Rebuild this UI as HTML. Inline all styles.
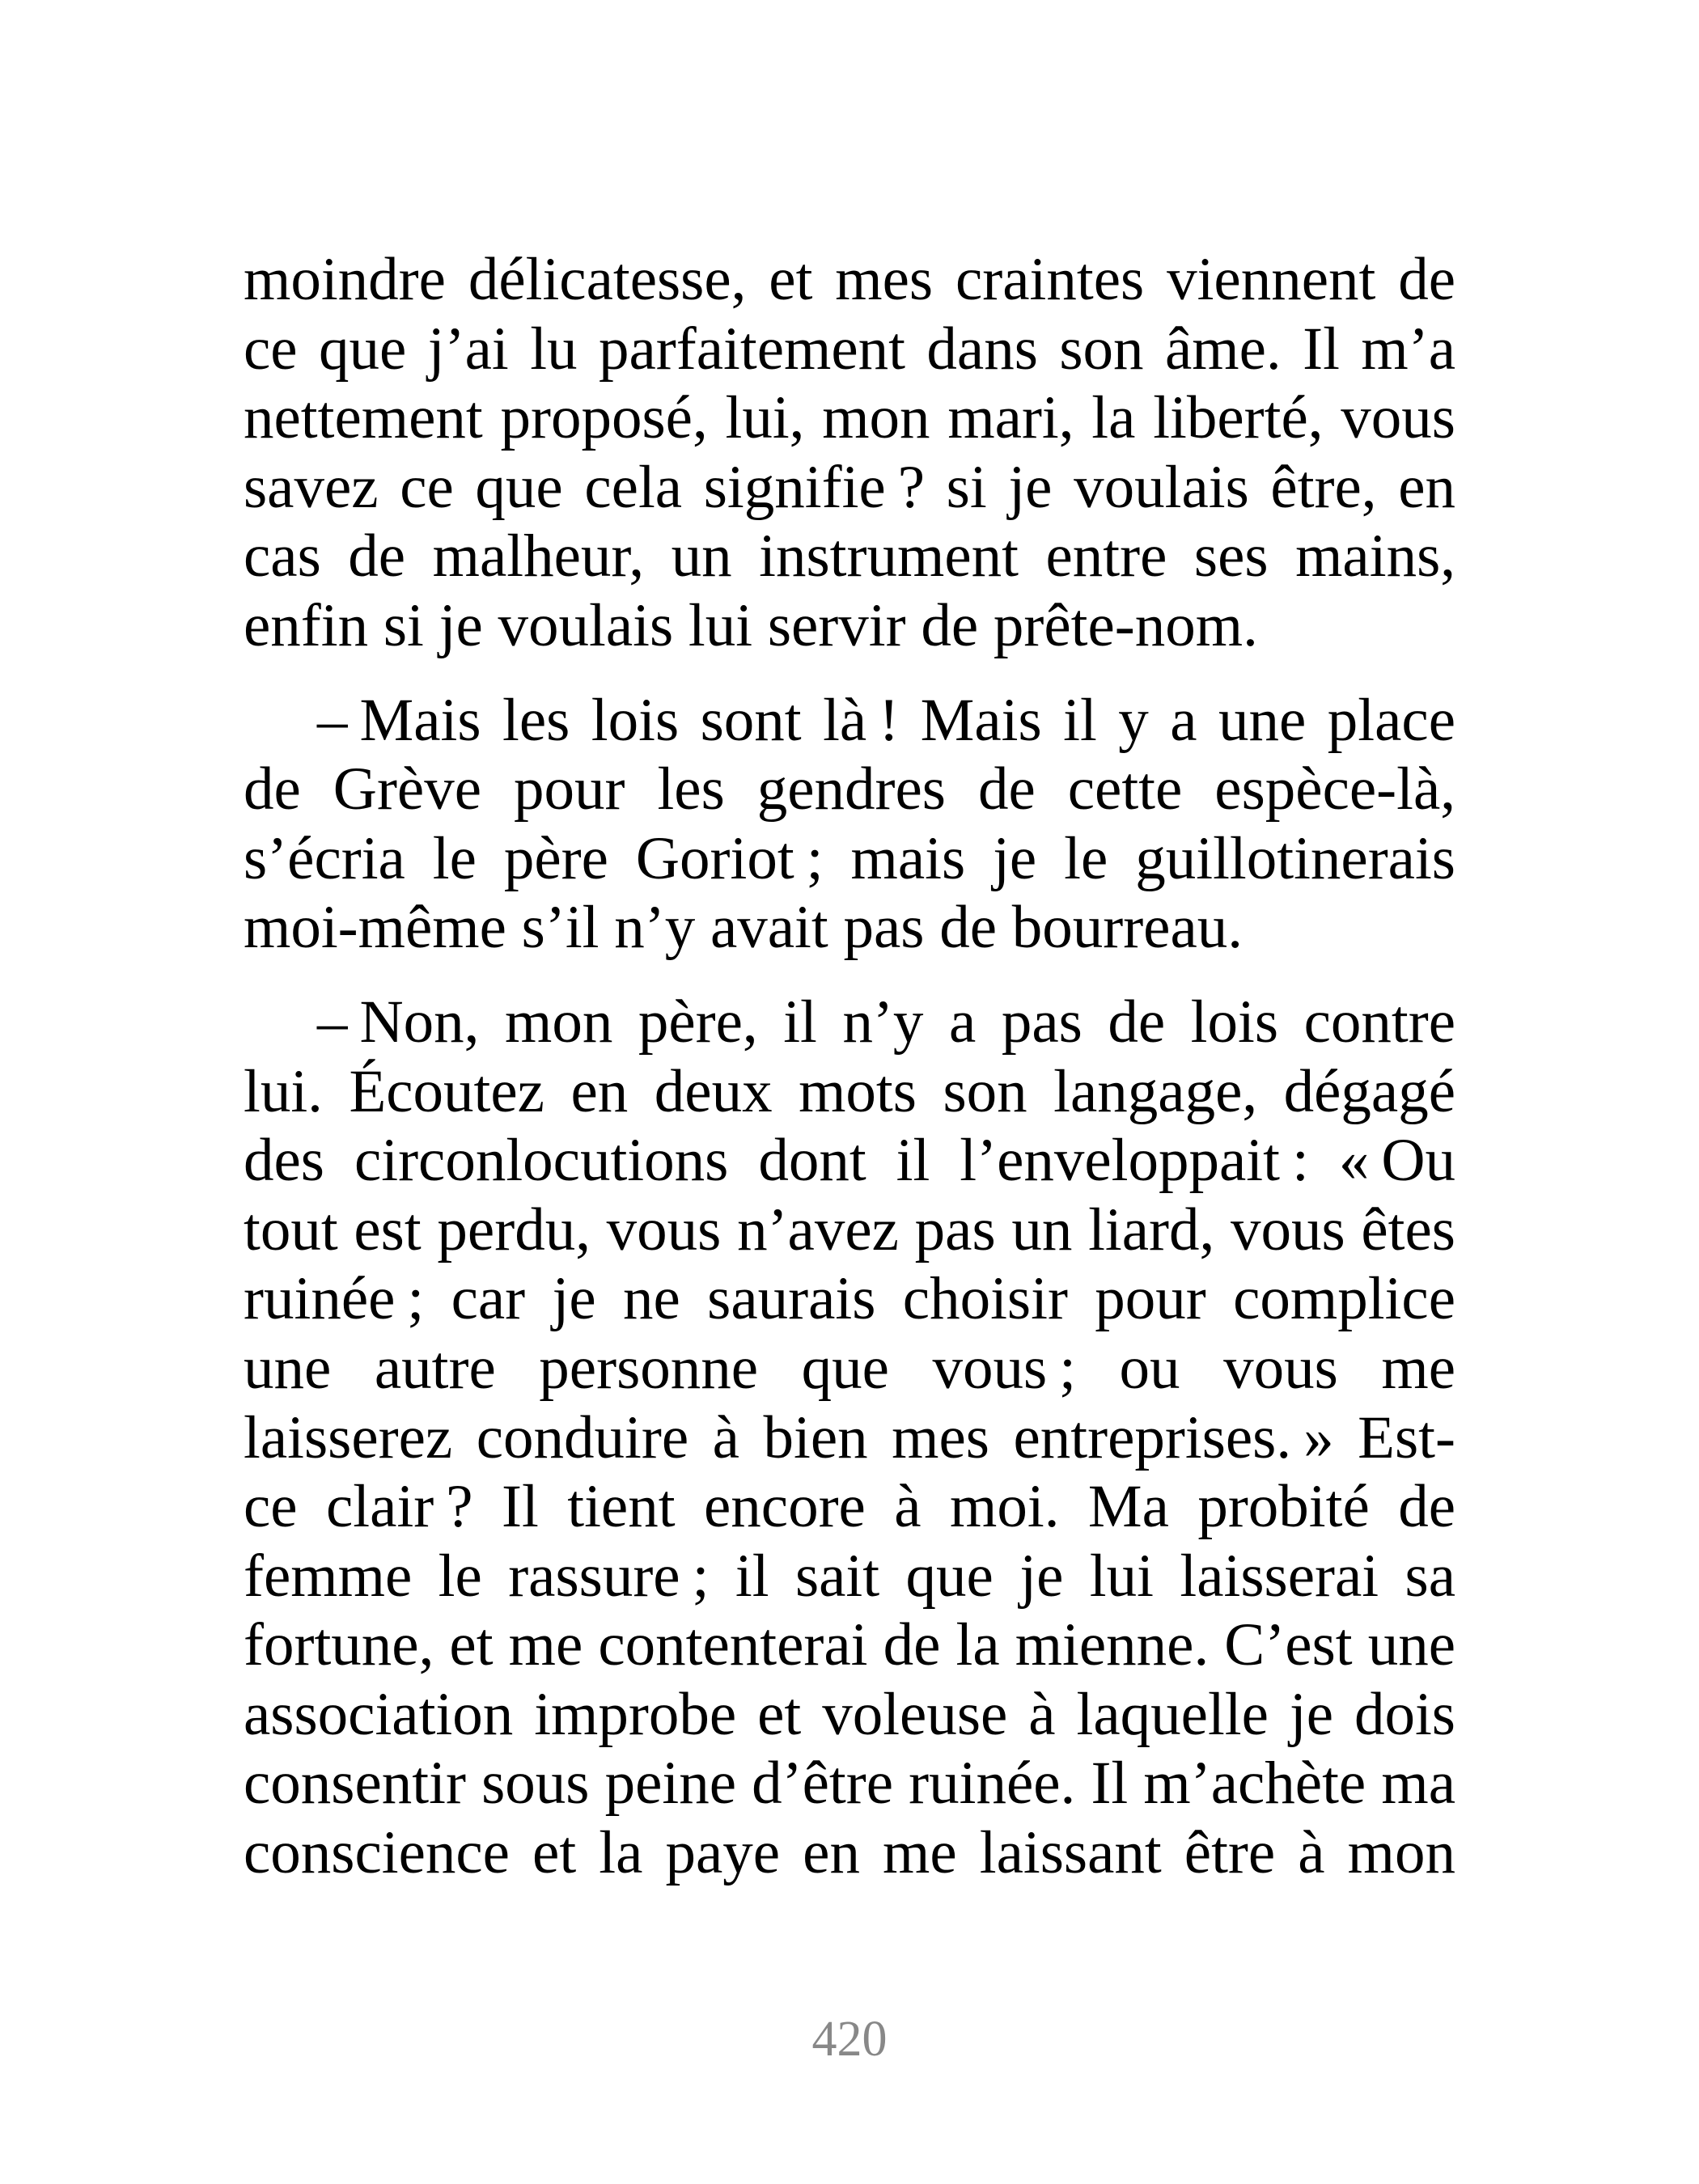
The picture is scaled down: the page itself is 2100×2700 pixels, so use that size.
<!DOCTYPE html>
<html><head><meta charset="utf-8"><style>
html,body{margin:0;padding:0;background:#fff;}
body{width:2100px;height:2700px;position:relative;overflow:hidden;font-family:"Liberation Serif",serif;color:#000;}
#t{position:absolute;left:301px;top:303px;width:1498px;font-size:75px;line-height:85.6px;}
.l{height:85.6px;white-space:nowrap;text-align:justify;text-align-last:justify;}
.e{text-align-last:left;}
.p{margin-top:31px;}
.i{padding-left:91px;}
#n{position:absolute;left:0;width:2100px;top:2486px;text-align:center;font-size:62px;line-height:70px;color:#888;}
</style></head><body>
<div id="t">
<div class="l">moindre délicatesse, et mes craintes viennent de</div>
<div class="l">ce que j’ai lu parfaitement dans son âme. Il m’a</div>
<div class="l">nettement proposé, lui, mon mari, la liberté, vous</div>
<div class="l">savez ce que cela signifie&#8239;? si je voulais être, en</div>
<div class="l">cas de malheur, un instrument entre ses mains,</div>
<div class="l e">enfin si je voulais lui servir de prête-nom.</div>
<div class="l i p">–&#8239;Mais les lois sont là&#8239;! Mais il y a une place</div>
<div class="l">de Grève pour les gendres de cette espèce-là,</div>
<div class="l">s’écria le père Goriot&#8239;; mais je le guillotinerais</div>
<div class="l e">moi-même s’il n’y avait pas de bourreau.</div>
<div class="l i p">–&#8239;Non, mon père, il n’y a pas de lois contre</div>
<div class="l">lui. Écoutez en deux mots son langage, dégagé</div>
<div class="l">des circonlocutions dont il l’enveloppait&#8239;: «&#8239;Ou</div>
<div class="l">tout est perdu, vous n’avez pas un liard, vous êtes</div>
<div class="l">ruinée&#8239;; car je ne saurais choisir pour complice</div>
<div class="l">une autre personne que vous&#8239;; ou vous me</div>
<div class="l">laisserez conduire à bien mes entreprises.&#8239;» Est-</div>
<div class="l">ce clair&#8239;? Il tient encore à moi. Ma probité de</div>
<div class="l">femme le rassure&#8239;; il sait que je lui laisserai sa</div>
<div class="l">fortune, et me contenterai de la mienne. C’est une</div>
<div class="l">association improbe et voleuse à laquelle je dois</div>
<div class="l">consentir sous peine d’être ruinée. Il m’achète ma</div>
<div class="l">conscience et la paye en me laissant être à mon</div>
</div>
<div id="n">420</div>
</body></html>
